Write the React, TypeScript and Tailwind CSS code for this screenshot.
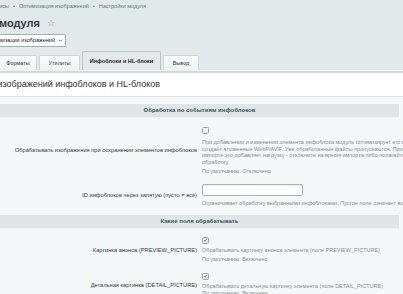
import type { ReactNode } from "react";

function Check({ on }: { on?: boolean }) {
  return (
    <span className="flex h-[7px] w-[7px] items-center justify-center rounded-[1.5px] border border-[#9aa5aa] bg-gradient-to-b from-[#ffffff] to-[#dfe4e6]">
      {on && (
        <svg viewBox="0 0 10 10" className="h-[6px] w-[6px]">
          <path d="M2 5.2 L4.2 7.4 L8.2 2.6" fill="none" stroke="#4a5358" strokeWidth="1.6" />
        </svg>
      )}
    </span>
  );
}

function Heading({ children }: { children: ReactNode }) {
  return (
    <div className="flex h-[14px] w-[399px] items-center justify-center border-b border-[#eef3f3] bg-[#dfe6e7] text-[6px] font-bold text-[#46535a]">
      {children}
    </div>
  );
}

function Row({ label, children, className }: { label: string; children: ReactNode; className?: string }) {
  return (
    <div className={`flex items-center ${className ?? ""}`}>
      <div className="w-[197px] shrink-0 whitespace-nowrap text-right text-[5.7px] text-[#363a3d]">{label}</div>
      <div className="flex-1 whitespace-nowrap pl-[5px]">{children}</div>
    </div>
  );
}

const desc = "text-[5.5px] leading-[6.6px] text-[#858f94]";

export default function App() {
  return (
    <div className="h-[294px] w-[403px] overflow-hidden bg-[#e2e9ea] font-['Liberation_Sans',Arial,sans-serif]">
      {/* breadcrumbs */}
      <div className="flex h-[13px] items-center">
        <div className="flex w-[146px] justify-end overflow-hidden whitespace-nowrap text-[5.5px] text-[#5d7a8a]">
          <span>Сервисы</span>
          <span className="px-[4px]">•</span>
          <span>Оптимизация изображений</span>
          <span className="px-[4px]">•</span>
          <span>Настройки модуля</span>
        </div>
      </div>

      {/* title */}
      <div className="mt-[2px] flex h-[16px] items-center">
        <div className="flex w-[40px] justify-end overflow-hidden whitespace-nowrap text-[11px] font-bold text-[#333b40]">
          Настройки модуля
        </div>
        <span className="ml-[7px] text-[9px] leading-none text-[#8d9aa3]">☆</span>
      </div>

      {/* module select */}
      <div className="mt-[3px] flex h-[13px] w-[66px] items-center overflow-hidden rounded-r-[2px] border border-l-0 border-[#a3aeb3] bg-white">
        <div className="flex w-[55px] justify-end overflow-hidden whitespace-nowrap text-[5.5px] text-[#222]">
          Оптимизации изображений
        </div>
        <svg viewBox="0 0 10 10" className="ml-[3px] h-[5px] w-[5px]">
          <path d="M2 3.5 L5 6.5 L8 3.5" fill="none" stroke="#333" strokeWidth="1.4" />
        </svg>
      </div>

      {/* tabs */}
      <div className="mt-[4px] flex h-[19px] items-end gap-[2px] text-[5.5px] text-[#333]">
        <div className="flex h-[15px] w-[37px] items-center justify-center rounded-tr-[2px] border border-b-0 border-l-0 border-[#cdd6d8] bg-gradient-to-b from-[#fbfcfc] to-[#eef2f3]">
          Форматы
        </div>
        <div className="flex h-[15px] w-[41px] items-center justify-center rounded-t-[2px] border border-b-0 border-[#cdd6d8] bg-gradient-to-b from-[#fbfcfc] to-[#eef2f3]">
          Утилиты
        </div>
        <div className="flex h-[19px] w-[79px] items-center justify-center rounded-t-[2px] border border-b-0 border-[#bcc6c9] bg-[#e4eaeb] font-bold text-[#1f2326]">
          Инфоблоки и HL-блоки
        </div>
        <div className="flex h-[15px] w-[36px] items-center justify-center rounded-t-[2px] border border-b-0 border-[#cdd6d8] bg-gradient-to-b from-[#fbfcfc] to-[#eef2f3]">
          Вывод
        </div>
      </div>
      <div className="h-[3px] border-t border-[#eef2f2] bg-[#d3dadc]" />

      {/* tab title */}
      <div className="flex h-[24px] items-center border-b border-[#dce3e4] bg-white">
        <div className="flex w-[160px] justify-end overflow-hidden whitespace-nowrap text-[9px] text-[#2e3438]">
          Настройки обработки изображений инфоблоков и HL-блоков
        </div>
      </div>

      {/* content */}
      <div className="h-full bg-[#f4f8f8] pt-[7px]">
        <Heading>Обработка по событиям инфоблоков</Heading>

        <Row label="Обрабатывать изображения при сохранении элементов инфоблоков" className="pt-[8px] pb-[4px]">
          <div className="pt-[1px]">
            <Check />
          </div>
          <div className={`${desc} mt-[5px]`}>
            При добавлении и изменении элемента инфоблока модуль оптимизирует его изображения и
            <br />
            создаёт вложенные WebP/AVIF. Уже обработанные файлы пропускаются. При массовом
            <br />
            импорте это добавляет нагрузку - отключите на время импорта либо полагайтесь на агента
            <br />
            обработку.
          </div>
          <div className={`${desc} mt-[2.6px]`}>По умолчанию: Отключено</div>
        </Row>

        <Row label="ID инфоблоков через запятую (пусто = все)" className="pt-[5px] pb-[8px]">
          <div className="h-[12px] w-[101px] rounded-[2px] border border-[#a9b4b9] bg-white shadow-[inset_0_1px_1px_rgba(0,0,0,0.08)]" />
          <div className={`${desc} mt-[4.5px]`}>
            Ограничивает обработку выбранными инфоблоками. Пустое поле означает все инфоблоки.
          </div>
        </Row>

        <Heading>Какие поля обрабатывать</Heading>

        <Row label="Картинка анонса (PREVIEW_PICTURE)" className="pt-[8px] pb-[3px]">
          <Check on />
          <div className={`${desc} mt-[3.5px]`}>Обрабатывать картинку анонса элемента (поле PREVIEW_PICTURE)</div>
          <div className={`${desc} mt-[2.6px]`}>По умолчанию: Включено</div>
        </Row>

        <Row label="Детальная картинка (DETAIL_PICTURE)" className="pt-[7px]">
          <Check on />
          <div className={`${desc} mt-[3px]`}>Обрабатывать детальную картинку элемента (поле DETAIL_PICTURE)</div>
          <div className={`${desc} mt-[0.5px]`}>По умолчанию: Включено</div>
        </Row>
      </div>
    </div>
  );
}
